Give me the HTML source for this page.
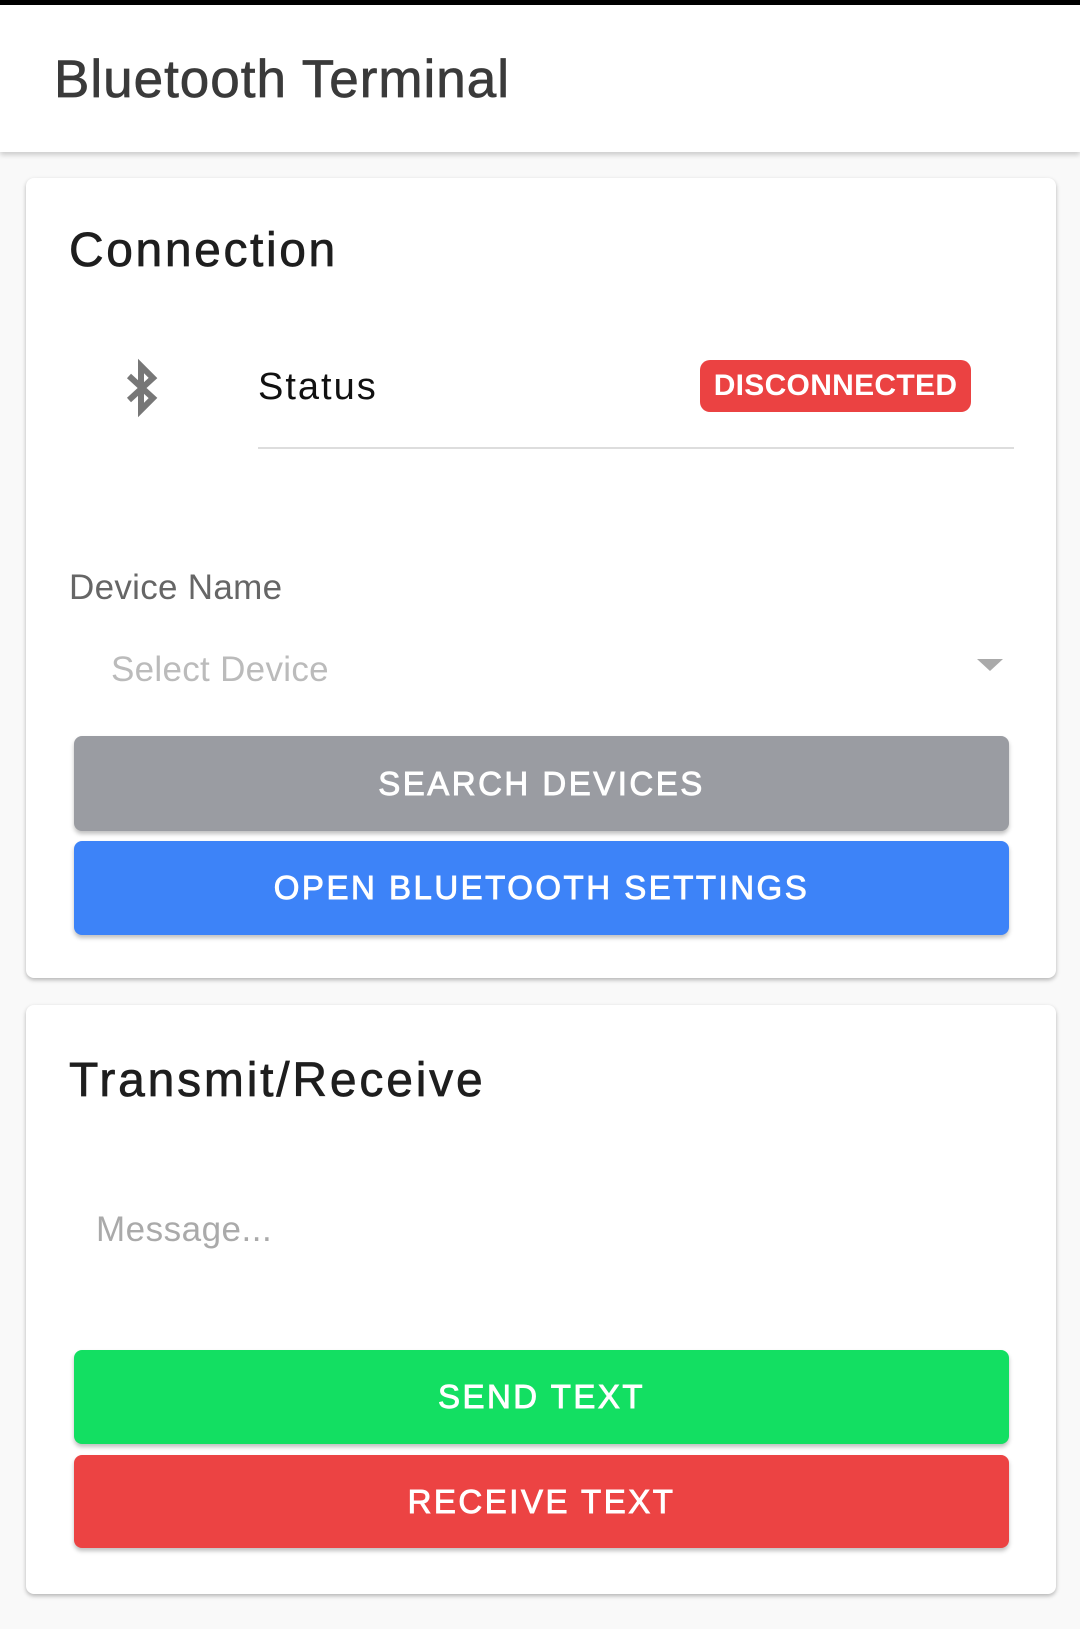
<!DOCTYPE html>
<html><head><meta charset="utf-8"><style>
*{margin:0;padding:0;box-sizing:border-box}
body{width:1080px;height:1629px;background:#f9f9f9;font-family:"Liberation Sans",sans-serif;position:relative;overflow:hidden}
.abs{position:absolute}
.top{left:0;top:0;width:1080px;height:5px;background:#000}
.hdr{left:0;top:5px;width:1080px;height:147px;background:#fff;box-shadow:0 3px 5px rgba(0,0,0,.18)}
.card{background:#fff;border-radius:8px;box-shadow:0 2px 4px rgba(0,0,0,.28);left:26px;width:1030px}
.btn{left:74px;width:935px;border-radius:8px;color:#fff;font-size:33px;letter-spacing:2.5px;display:flex;align-items:center;justify-content:center;box-shadow:0 3px 4px rgba(0,0,0,.25);-webkit-text-stroke:0.9px #fff}
.h{-webkit-text-stroke:0.7px currentColor}
</style></head><body>
<div class="abs top"></div>
<div class="abs hdr"></div>
<div class="abs h" style="left:54px;top:49px;font-size:53px;color:#3a3a3a;letter-spacing:1px">Bluetooth Terminal</div>

<div class="abs card" style="top:178px;height:800px"></div>
<div class="abs h" style="left:69px;top:223px;font-size:48px;color:#1e1e1e;letter-spacing:2.6px">Connection</div>
<svg class="abs" style="left:122px;top:358px" width="40" height="60" viewBox="0 0 40 60"><path d="M7 18 L31 40 L19 52 L19 8 L31 20 L7 42" fill="none" stroke="#777" stroke-width="6" stroke-linejoin="miter"/></svg>
<div class="abs" style="left:258px;top:366px;font-size:38px;color:#111;letter-spacing:2px">Status</div>
<div class="abs" style="left:700px;top:360px;width:271px;height:52px;background:#eb4242;border-radius:10px;color:#fff;font-weight:bold;font-size:30px;display:flex;align-items:center;justify-content:center;letter-spacing:0.3px">DISCONNECTED</div>
<div class="abs" style="left:258px;top:447px;width:756px;height:2px;background:#ddd"></div>
<div class="abs" style="left:69px;top:568px;font-size:35px;color:#666;letter-spacing:0.3px">Device Name</div>
<div class="abs" style="left:111px;top:650px;font-size:35px;color:#bbb;letter-spacing:0.3px">Select Device</div>
<svg class="abs" style="left:977px;top:659px" width="26" height="12"><path d="M0 0 L26 0 L13 12Z" fill="#aaa"/></svg>
<div class="abs btn" style="top:736px;height:95px;background:#9a9ca2">SEARCH DEVICES</div>
<div class="abs btn" style="top:841px;height:94px;background:#3d83f8">OPEN BLUETOOTH SETTINGS</div>

<div class="abs card" style="top:1005px;height:589px"></div>
<div class="abs h" style="left:69px;top:1053px;font-size:48px;color:#1e1e1e;letter-spacing:2.8px">Transmit/Receive</div>
<div class="abs" style="left:96px;top:1210px;font-size:35px;color:#aaa;letter-spacing:0.5px">Message...</div>
<div class="abs btn" style="top:1350px;height:94px;background:#13df62">SEND TEXT</div>
<div class="abs btn" style="top:1455px;height:93px;background:#ec4343">RECEIVE TEXT</div>
</body></html>
